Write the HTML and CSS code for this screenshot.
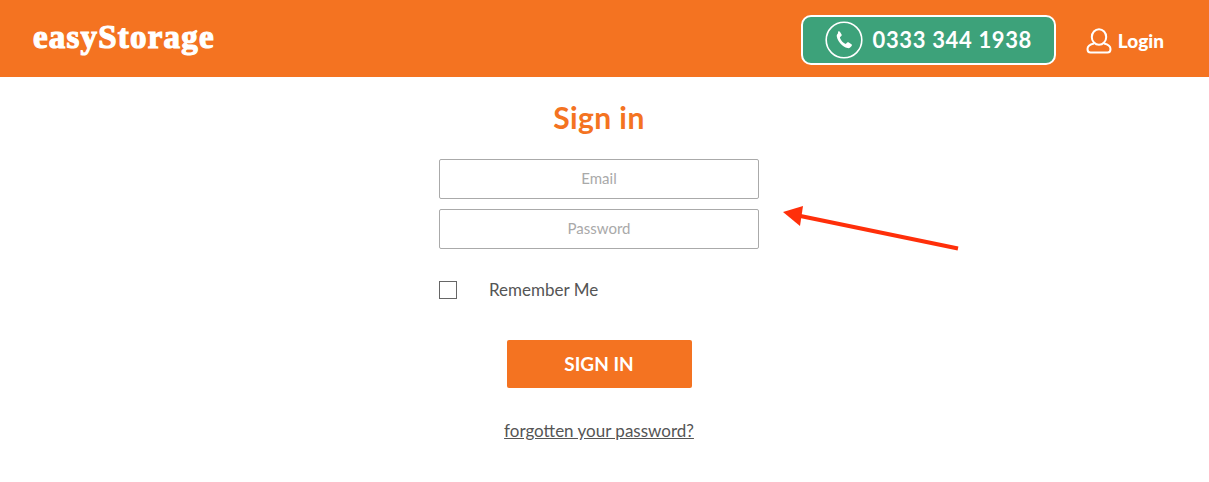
FILE: index.html
```html
<!DOCTYPE html>
<html lang="en">
<head>
    <meta charset="UTF-8">
    <meta name="viewport" content="width=device-width, initial-scale=1.0">
    <title>easyStorage - Sign in</title>
    <link rel="stylesheet" href="styles.css">
</head>
<body>
    <header class="site-header">
        <a href="#" class="logo">easyStorage</a>
        <div class="header-actions">
            <a href="#" class="phone-btn">
                <svg class="phone-icon" width="38" height="38" viewBox="0 0 38 38" fill="none">
                    <circle cx="19" cy="19" r="17.8" stroke="#fff" stroke-width="1.6"/>
                    <path d="M13.2 10.6c.6-.5 1.3-.4 1.7.2l1.7 2.7c.3.6.2 1.2-.3 1.6l-1.1.9c-.3.3-.3.6-.2 1 .5 1.3 1.2 2.400 2.100 3.400.9 1 1.900 1.800 3.100 2.400.4.200.7.100 1-.2l1-1c.5-.5 1.100-.5 1.600-.2l2.600 1.900c.6.400.7 1.100.2 1.700l-1.200 1.300c-.8.800-1.800 1.100-2.900.8-2.600-.7-4.900-2.200-6.900-4.300-2-2.200-3.300-4.600-3.800-7.200-.2-1.100.1-2.100 1-2.800z" fill="#fff"/>
                </svg>
                <span class="phone-number">0333 344 1938</span>
            </a>
            <a href="#" class="login-link">
                <svg width="26" height="26" viewBox="0 0 26 26" fill="none" stroke="#fff" stroke-width="2">
                    <ellipse cx="13" cy="9" rx="7.2" ry="7.800"/>
                    <path d="M8 15.500c-3.500.8-6.500 2.700-6.500 5.500 0 2 1 3.500 3 3.500h17c2 0 3-1.500 3-3.500 0-2.800-3-4.700-6.500-5.500"/>
                </svg>
                <span>Login</span>
            </a>
        </div>
    </header>

    <main class="signin">
        <form class="signin-form">
            <h1>Sign in</h1>
            <input type="email" class="form-input" placeholder="Email">
            <input type="password" class="form-input" placeholder="Password">
            <label class="remember">
                <span class="checkbox"></span>
                Remember Me
            </label>
            <button type="button" class="btn-signin">SIGN IN</button>
            <a href="#" class="forgot">forgotten your password?</a>
        </form>
    </main>

    <svg class="arrow" width="180" height="48" viewBox="0 0 180 48" fill="none">
        <path d="M176 43.500L16 10.500" stroke="#ff2f0a" stroke-width="4"/>
        <path d="M1 7L21 1L18 21z" fill="#ff2f0a"/>
    </svg>
</body>
</html>
```

FILE: styles.css
```css
:root {
    --orange: #f47321;
    --green: #3da27a;
    --text: #555;
}

* {
    margin: 0;
    padding: 0;
    box-sizing: border-box;
}

body {
    font-family: 'Lato', sans-serif;
    background: #fff;
    color: var(--text);
    position: relative;
    height: 482px;
    overflow: hidden;
}

a {
    text-decoration: none;
    color: inherit;
}

.site-header {
    height: 77px;
    background: var(--orange);
    display: flex;
    align-items: center;
    justify-content: space-between;
    padding: 0 45px 0 33px;
}

.logo {
    font-family: 'Liberation Serif', serif;
    font-size: 33px;
    font-weight: 700;
    color: #fff;
    -webkit-text-stroke: 1.2px #fff;
    letter-spacing: 1.2px;
    margin-top: -2px;
}

.header-actions {
    display: flex;
    align-items: center;
    gap: 30px;
}

.phone-btn {
    width: 255px;
    height: 50px;
    margin-top: 3px;
    background: var(--green);
    border: 2px solid #fff;
    border-radius: 10px;
    display: flex;
    align-items: center;
    justify-content: center;
    gap: 10px;
    color: #fff;
    font-size: 22px;
    font-weight: 700;
    letter-spacing: 0.65px;
}

.phone-number {
    padding-bottom: 2px;
}

.login-link {
    display: flex;
    align-items: center;
    gap: 6px;
    color: #fff;
    font-size: 19px;
    font-weight: 900;
    margin-top: 4px;
}

.signin {
    display: flex;
    justify-content: center;
    padding-right: 11px;
}

.signin-form {
    width: 320px;
    display: flex;
    flex-direction: column;
    align-items: center;
}

.signin-form h1 {
    color: var(--orange);
    font-size: 30px;
    font-weight: 700;
    line-height: 36px;
    margin: 22px 0 24px;
    letter-spacing: 0.4px;
}

.form-input {
    width: 100%;
    height: 40px;
    border: 1px solid #aaa;
    border-radius: 2px;
    margin-bottom: 10px;
    padding-bottom: 2px;
    font-family: inherit;
    font-size: 15px;
    text-align: center;
    outline: none;
}

.form-input::placeholder {
    color: #a9a9a9;
}

.remember {
    align-self: flex-start;
    display: flex;
    align-items: center;
    gap: 32px;
    margin-top: 21px;
    font-size: 17px;
    line-height: 20px;
}

.checkbox {
    width: 18px;
    height: 18px;
    border: 1px solid #666;
}

.btn-signin {
    width: 185px;
    height: 48px;
    margin-top: 40px;
    padding-bottom: 2px;
    background: var(--orange);
    border: none;
    border-radius: 2px;
    color: #fff;
    font-family: inherit;
    font-size: 19px;
    font-weight: 700;
}

.forgot {
    margin-top: 32px;
    font-size: 17px;
    line-height: 22px;
    text-decoration: underline;
}

.arrow {
    position: absolute;
    left: 782px;
    top: 205px;
}
```
